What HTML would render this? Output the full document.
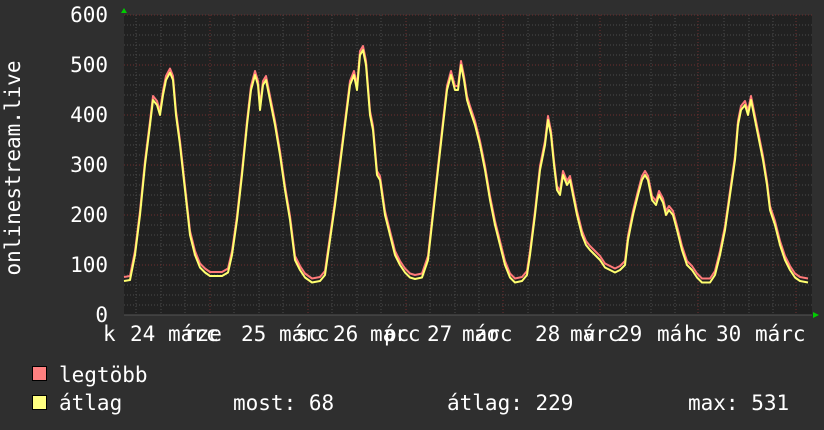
<!DOCTYPE html>
<html><head><meta charset="utf-8"><style>
html,body{margin:0;padding:0;background:#2f2f2f;}
body{width:824px;height:430px;overflow:hidden;position:relative;font-family:"DejaVu Sans Mono","Liberation Mono",monospace;color:#fff;}
svg{position:absolute;left:0;top:0}
</style></head><body>
<svg width="824" height="430" xmlns="http://www.w3.org/2000/svg" font-family="DejaVu Sans Mono, Liberation Mono, monospace">
<rect x="124" y="15" width="688" height="300" fill="#212121"/>
<g stroke="#4a4a4a" stroke-width="1" stroke-dasharray="1,2">
<path id="minorh" d="M124 25H812M124 35H812M124 45H812M124 55H812M124 75H812M124 85H812M124 95H812M124 105H812M124 125H812M124 135H812M124 145H812M124 155H812M124 175H812M124 185H812M124 195H812M124 205H812M124 225H812M124 235H812M124 245H812M124 255H812M124 275H812M124 285H812M124 295H812M124 305H812"/>
<path d="M136 15V315M161 15V315M185 15V315M234 15V315M259 15V315M283 15V315M332 15V315M357 15V315M381 15V315M430 15V315M455 15V315M479 15V315M528 15V315M553 15V315M577 15V315M626 15V315M651 15V315M675 15V315M724 15V315M749 15V315M773 15V315"/>
</g>
<g stroke="#6e2e2e" stroke-width="1" stroke-dasharray="1,2">
<path d="M124 15H812M124 65H812M124 115H812M124 165H812M124 215H812M124 265H812"/>
<path d="M210 15V315M308 15V315M406 15V315M503 15V315M600 15V315M698 15V315M796 15V315"/>
</g>
<path d="M124 315H812" stroke="#555" stroke-width="1"/>
<polygon points="121,13 127,13 124,8" fill="#0c0"/>
<polygon points="813,312 813,318 819,315" fill="#0c0"/>
<g id="curves" fill="none" stroke-width="2" stroke-linejoin="round">
<polyline id="p" stroke="#ff7a7a" transform="translate(0,-4)" points=""/>
<polyline id="y" stroke="#ffff70" points=""/>
</g>
<g font-size="21" fill="#fff" text-anchor="end">
<text x="108" y="22">600</text><text x="108" y="72">500</text><text x="108" y="122">400</text>
<text x="108" y="172">300</text><text x="108" y="222">200</text><text x="108" y="272">100</text><text x="108" y="322">0</text>
</g>
<text transform="translate(20,168) rotate(-90)" font-size="21" fill="#fff" text-anchor="middle">onlinestream.live</text>
<g font-size="21" fill="#fff">
<text x="103" y="341">k</text>
<text x="130" y="341">24</text><text x="168" y="341">márc</text><text x="184" y="341">rze</text>
<text x="241" y="341">25</text><text x="279" y="341">márc</text><text x="296" y="341">sc</text>
<text x="333" y="341">26</text><text x="370" y="341">márc</text><text x="384" y="341">pc</text>
<text x="427" y="341">27</text><text x="462" y="341">márc</text><text x="474" y="341">zo</text>
<text x="535" y="341">28</text><text x="570" y="341">márc</text><text x="583" y="341">v</text>
<text x="617" y="341">29</text><text x="657" y="341">márc</text><text x="684" y="341">h</text>
<text x="716" y="341">30</text><text x="755" y="341">márc</text>
</g>
<rect x="32.5" y="366.5" width="14" height="14" fill="#ff8080" stroke="#000"/>
<rect x="32.5" y="395.5" width="14" height="14" fill="#ffff80" stroke="#000"/>
<g font-size="21" fill="#fff">
<text x="59" y="382">legtöbb</text>
<text x="59" y="410">átlag</text>
<text x="233" y="410">most: 68</text>
<text x="447" y="410">átlag: 229</text>
<text x="688" y="410">max: 531</text>
</g>
</svg>
<script>
var d=[124,68,130,70,135,120,140,200,145,300,150,380,153,430,157,420,160,400,163,440,166,470,170,485,173,470,176,400,180,340,185,250,190,160,195,120,200,95,205,85,210,78,215,78,222,78,228,85,
232,120,237,190,242,280,247,380,251,450,255,480,258,460,260,410,263,460,266,470,269,440,272,410,275,380,280,320,285,250,290,190,295,110,300,90,305,75,312,65,320,68,325,80,
330,150,335,220,340,300,345,380,350,460,354,480,357,450,360,520,363,530,366,500,370,400,373,370,377,280,380,270,385,200,390,160,395,120,400,100,405,85,410,75,415,72,422,75,428,110,
433,200,438,290,443,380,447,450,451,480,455,450,458,450,461,500,464,470,467,430,470,410,475,380,480,340,485,290,490,230,495,180,500,140,505,100,510,75,515,65,522,68,527,80,
530,120,535,200,540,290,545,340,548,390,551,360,554,300,557,250,560,240,563,280,567,260,570,270,573,240,577,200,582,160,586,140,590,130,595,120,600,110,605,95,610,90,615,85,620,90,625,100,
628,150,633,200,638,240,642,270,645,280,648,270,652,230,656,220,659,240,663,225,666,200,669,210,673,200,677,170,682,130,687,100,692,90,697,75,702,65,710,65,715,80,
720,120,725,170,730,240,735,310,738,380,741,410,745,420,748,400,751,430,754,400,757,370,760,340,763,310,767,260,770,210,775,180,780,140,785,110,790,90,795,75,800,68,808,65];
var s="";for(var i=0;i<d.length;i+=2){s+=d[i]+","+(315-d[i+1]*0.5)+" ";}
document.getElementById("p").setAttribute("points",s);
document.getElementById("y").setAttribute("points",s);
</script>
</body></html>
